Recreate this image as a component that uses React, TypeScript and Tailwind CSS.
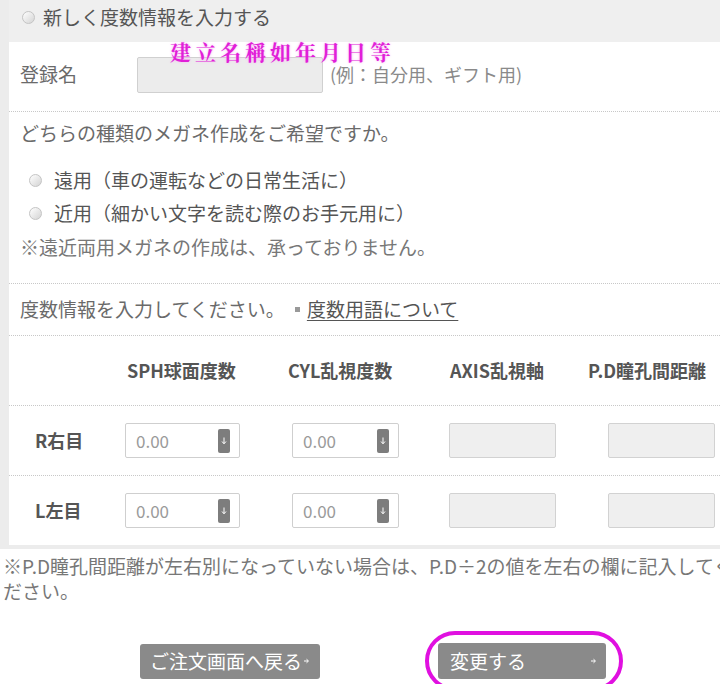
import React from "react";

const font = "font-['Noto_Sans_CJK_JP','Noto_Sans_CJK_SC',sans-serif]";

function Radio() {
  return (
    <span className="inline-block w-[13px] h-[13px] rounded-full border border-[#c4c4c4] bg-gradient-to-br from-white to-[#d4d4d4] shrink-0" />
  );
}

function Arrow({ size = 6 }: { size?: number }) {
  return (
    <svg width={size} height={size} viewBox="0 0 6 6" className="shrink-0">
      <path d="M0 3h4M2.5 1.2L4.5 3 2.5 4.8" stroke="white" strokeWidth="1" fill="none" />
    </svg>
  );
}

function SelectBox({ width }: { width: string }) {
  return (
    <div className={`${width} h-[35px] border border-[#cfcfcf] rounded-[2px] bg-white flex items-center justify-between pl-[10px] pr-[9px]`}>
      <span className="text-[17px] text-[#9a9a9a]">0.00</span>
      <span className="w-[12px] h-[24px] bg-[#7d7d7d] rounded-[2px] flex items-center justify-center">
        <svg width="6" height="8" viewBox="0 0 6 8">
          <path d="M3 0.5v6M1 4.5L3 6.8 5 4.5" stroke="white" strokeWidth="1" fill="none" />
        </svg>
      </span>
    </div>
  );
}

function Blank() {
  return <div className="w-[107px] h-[35px] border border-[#d2d2d2] rounded-[2px] bg-[#efefef]" />;
}

function Dots() {
  return <div className="border-t border-dotted border-[#c8c8c8]" />;
}

export default function App() {
  return (
    <div className={`w-[720px] h-[684px] overflow-hidden bg-white text-[#6a6a6a] ${font}`}>
      <div className="w-[760px] border-l-[9px] border-b-[4px] border-[#ececec]">
        <div className="h-[42px] bg-[#efefef] flex items-center gap-[8px] pl-[13px] pb-[8px]">
          <Radio />
          <span className="text-[19px] text-[#555]">新しく度数情報を入力する</span>
        </div>

        <div className="relative h-[69px] flex items-center pl-[11px] pb-[4px]">
          <span className="text-[19px] w-[117px]">登録名</span>
          <div className="w-[186px] h-[36px] bg-[#ececec] border border-[#d0d0d0] rounded-[2px]" />
          <span className="ml-[7px] text-[18px] text-[#8a8a8a]">(例：自分用、ギフト用)</span>
          <span className="absolute left-[161px] top-[-6px] text-[21px] font-bold tracking-[4px] text-[#e11fd8] font-['Noto_Serif_CJK_TC','Noto_Sans_CJK_TC',serif] [text-shadow:0_0_3px_#f7b6f3]">
            建立名稱如年月日等
          </span>
        </div>
        <Dots />

        <div className="pl-[11px] pt-[9px] pb-[24px] text-[19px]">
          <div className="h-[24px] leading-[24px]">どちらの種類のメガネ作成をご希望ですか。</div>
          <div className="mt-[23px] h-[24px] flex items-center gap-[12px] pl-[9px]">
            <Radio />
            <span className="text-[#555]">遠用（車の運転などの日常生活に）</span>
          </div>
          <div className="mt-[9px] h-[24px] flex items-center gap-[12px] pl-[9px]">
            <Radio />
            <span className="text-[#555]">近用（細かい文字を読む際のお手元用に）</span>
          </div>
          <div className="mt-[10px] h-[24px] leading-[24px] text-[#777]">※遠近両用メガネの作成は、承っておりません。</div>
        </div>
        <Dots />

        <div className="h-[51px] flex items-center pl-[11px] text-[19px]">
          <span>度数情報を入力してください。</span>
          <span className="ml-[10px] mr-[7px] w-[5px] h-[5px] bg-[#999]" />
          <a className="text-[#555] underline underline-offset-[3px]">度数用語について</a>
        </div>
        <Dots />

        <div className="h-[69px] flex items-center text-[18px] font-bold text-[#555] whitespace-nowrap">
          <span className="ml-[118px] w-[161px]">SPH球面度数</span>
          <span className="w-[162px]">CYL乱視度数</span>
          <span className="w-[138px]">AXIS乱視軸</span>
          <span>P.D瞳孔間距離</span>
        </div>
        <Dots />

        {["R右目", "L左目"].map((label, i) => (
          <React.Fragment key={label}>
            <div className="h-[69px] flex items-center">
              <span className="w-[116px] pl-[26px] text-[18px] font-bold text-[#555]">{label}</span>
              <SelectBox width="w-[115px]" />
              <div className="ml-[52px]"><SelectBox width="w-[107px]" /></div>
              <div className="ml-[50px]"><Blank /></div>
              <div className="ml-[52px]"><Blank /></div>
            </div>
            {i === 0 && <Dots />}
          </React.Fragment>
        ))}
      </div>

      <p className="mt-[4px] pl-[3px] text-[19px] leading-[25px] text-[#777] whitespace-nowrap">
        ※P.D瞳孔間距離が左右別になっていない場合は、P.D÷2の値を左右の欄に記入してく
        <br />
        ださい。
      </p>

      <div className="mt-[40px] flex items-center">
        <button className="ml-[140px] w-[180px] h-[35px] bg-[#8a8a8a] rounded-[3px] text-white text-[19px] flex items-center justify-center gap-[2px]">
          ご注文画面へ戻る<Arrow />
        </button>
        <div className="relative ml-[118px]">
          <button className="w-[168px] h-[36px] bg-[#8a8a8a] rounded-[3px] text-white text-[19px] flex items-center justify-between pl-[12px] pr-[9px]">
            変更する<Arrow />
          </button>
          <span className="absolute left-[-13px] top-[-12px] w-[198px] h-[60px] rounded-full border-[4px] border-[#e010e0]" />
        </div>
      </div>
    </div>
  );
}
